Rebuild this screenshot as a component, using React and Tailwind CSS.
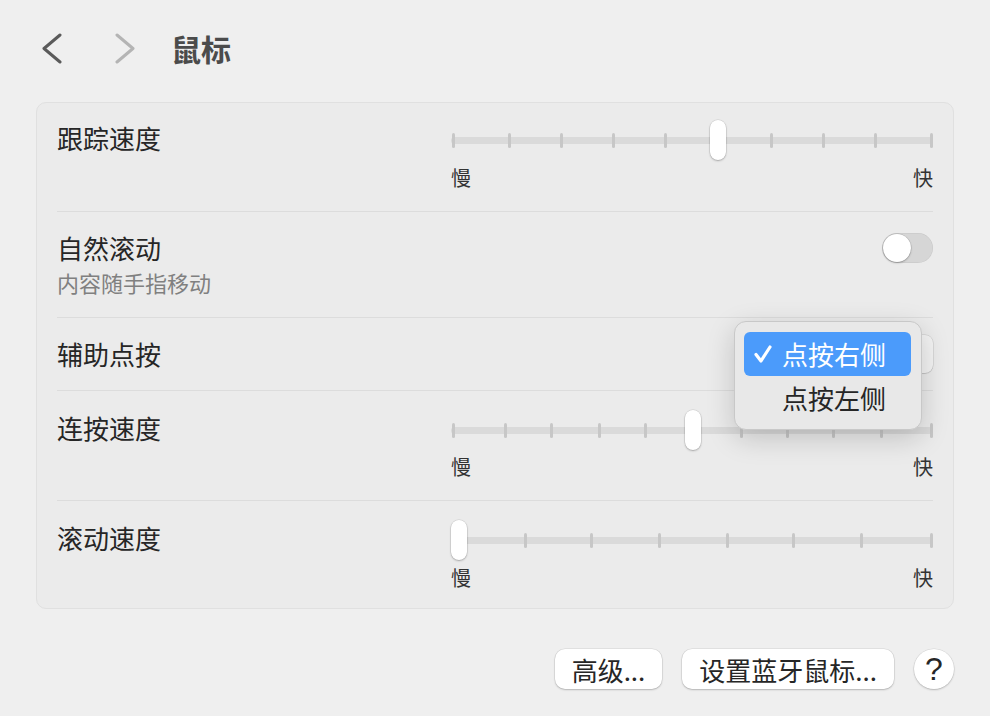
import React from "react";

const FONT = "font-['Noto_Sans_CJK_SC','Noto_Sans',sans-serif]";

function Slider({ ticks, thumb }) {
  return (
    <div className="w-[482px] flex flex-col">
      <div className="relative h-[40px]">
        <div className="absolute left-0 right-0 top-[16.5px] h-[7px] rounded-full bg-[#dadada]" />
        {ticks.map((t, i) => (
          <div
            key={i}
            className="absolute top-[12.5px] h-[15px] w-[3px] rounded-full bg-[#c7c7c7]"
            style={{ left: t - 1.5 }}
          />
        ))}
        <div
          className="absolute top-0 h-[40px] w-[16px] rounded-full bg-white shadow-[0_0_0_0.5px_rgba(0,0,0,0.12),0_1px_2px_rgba(0,0,0,0.25)]"
          style={{ left: thumb - 8 }}
        />
      </div>
    </div>
  );
}

function SliderRow({ label, ticks, thumb, pt, pb, gap }) {
  return (
    <div className="flex flex-col" style={{ paddingTop: pt, paddingBottom: pb }}>
      <div className="flex items-center justify-between">
        <div className="text-[26px] leading-[32px] text-[#262626] -mt-[4px]">{label}</div>
        <Slider ticks={ticks} thumb={thumb} />
      </div>
      <div className="flex justify-end" style={{ marginTop: gap }}>
        <div className="w-[482px] flex justify-between text-[20px] leading-[24px] text-[#333333]">
          <span>慢</span>
          <span>快</span>
        </div>
      </div>
    </div>
  );
}

function Sep() {
  return <div className="h-px bg-[#dcdcdc]" />;
}

export default function App() {
  return (
    <div className={`relative w-[990px] h-[716px] overflow-hidden bg-[#efefef] ${FONT}`}>
      {/* header */}
      <div className="flex items-center pt-[34px] h-[64px]">
        <svg className="ml-[41px]" width="22" height="32" viewBox="0 0 22 32">
          <path d="M19 2 L3 15.5 L19 29" fill="none" stroke="#5a5a5a" strokeWidth="3" strokeLinecap="round" strokeLinejoin="round" />
        </svg>
        <svg className="ml-[51px]" width="22" height="32" viewBox="0 0 22 32">
          <path d="M3 2 L19 15.5 L3 29" fill="none" stroke="#b4b4b4" strokeWidth="3" strokeLinecap="round" strokeLinejoin="round" />
        </svg>
        <div className="ml-[35px] text-[30px] leading-[32px] font-bold text-[#4b4b4b] -mt-[2px]">鼠标</div>
      </div>

      {/* panel */}
      <div className="mt-[38px] ml-[36px] w-[918px] rounded-[10px] border border-[#e0e0e0] bg-[#ebebeb] px-5">
        <SliderRow
          label="跟踪速度"
          ticks={[2, 58, 110, 162, 214, 267, 320, 372, 424, 480.5]}
          thumb={267}
          pt={17}
          pb={21}
          gap={6}
        />
        <Sep />
        <div className="pt-[20px] pb-[21px]">
          <div className="flex items-center justify-between">
            <div className="text-[26px] leading-[32px] text-[#262626]">自然滚动</div>
            <div className="relative w-[51px] h-[30px] rounded-full bg-[#d6d6d6] shadow-[inset_0_0_0_0.5px_rgba(0,0,0,0.08)]">
              <div className="absolute left-[1px] top-[1px] w-[28px] h-[28px] rounded-full bg-white shadow-[0_0_0_0.5px_rgba(0,0,0,0.15),0_1px_2px_rgba(0,0,0,0.25)]" />
            </div>
          </div>
          <div className="mt-[4px] text-[22px] leading-[28px] text-[#808080]">内容随手指移动</div>
        </div>
        <Sep />
        <div className="h-[72px] flex items-center justify-between">
          <div className="text-[26px] leading-[32px] text-[#262626]">辅助点按</div>
          <div className="w-[150px] h-[38px] rounded-[8px] bg-[#f3f3f3] shadow-[0_0_0_0.5px_rgba(0,0,0,0.15),0_1px_1px_rgba(0,0,0,0.1)]" />
        </div>
        <Sep />
        <SliderRow
          label="连按速度"
          ticks={[2, 54, 100, 148, 194, 242, 290, 336, 382, 430, 480.5]}
          thumb={242}
          pt={19}
          pb={21}
          gap={5}
        />
        <Sep />
        <SliderRow
          label="滚动速度"
          ticks={[8, 74, 140, 208, 276, 342, 410, 480.5]}
          thumb={8}
          pt={19}
          pb={18}
          gap={6}
        />
      </div>

      {/* footer */}
      <div className="mt-[40px] mr-[36px] flex justify-end items-center gap-5">
        <div className="h-[40px] px-[17px] rounded-[10px] bg-white flex items-center text-[26px] text-[#262626] shadow-[0_0_0_0.5px_rgba(0,0,0,0.1),0_1px_2px_rgba(0,0,0,0.2)]">
          高级...
        </div>
        <div className="h-[40px] px-[17px] rounded-[10px] bg-white flex items-center text-[26px] text-[#262626] shadow-[0_0_0_0.5px_rgba(0,0,0,0.1),0_1px_2px_rgba(0,0,0,0.2)]">
          设置蓝牙鼠标...
        </div>
        <div className="w-[40px] h-[40px] rounded-full bg-white flex items-center justify-center text-[32px] font-medium text-[#262626] shadow-[0_0_0_0.5px_rgba(0,0,0,0.1),0_1px_2px_rgba(0,0,0,0.2)] font-['Liberation_Sans',sans-serif]">
          ?
        </div>
      </div>

      {/* popup menu */}
      <div className="absolute left-[734px] top-[321px] w-[188px] h-[109px] rounded-[12px] border border-[#c8c8c8] bg-[#e8e8e8] pt-[10px] pl-[9px] pr-[10px] shadow-[0_8px_28px_rgba(0,0,0,0.18)]">
        <div className="h-[44px] rounded-[6px] bg-[#4b9bfb] flex items-center">
          <svg className="ml-[10px]" width="18" height="18" viewBox="0 0 18 18">
            <path d="M2 9.5 L7 16 L16 2" fill="none" stroke="white" strokeWidth="3.2" strokeLinecap="round" strokeLinejoin="round" />
          </svg>
          <span className="ml-[10px] text-[26px] leading-[32px] text-white">点按右侧</span>
        </div>
        <div className="h-[44px] flex items-center">
          <span className="ml-[38px] text-[26px] leading-[32px] text-[#262626]">点按左侧</span>
        </div>
      </div>
    </div>
  );
}
